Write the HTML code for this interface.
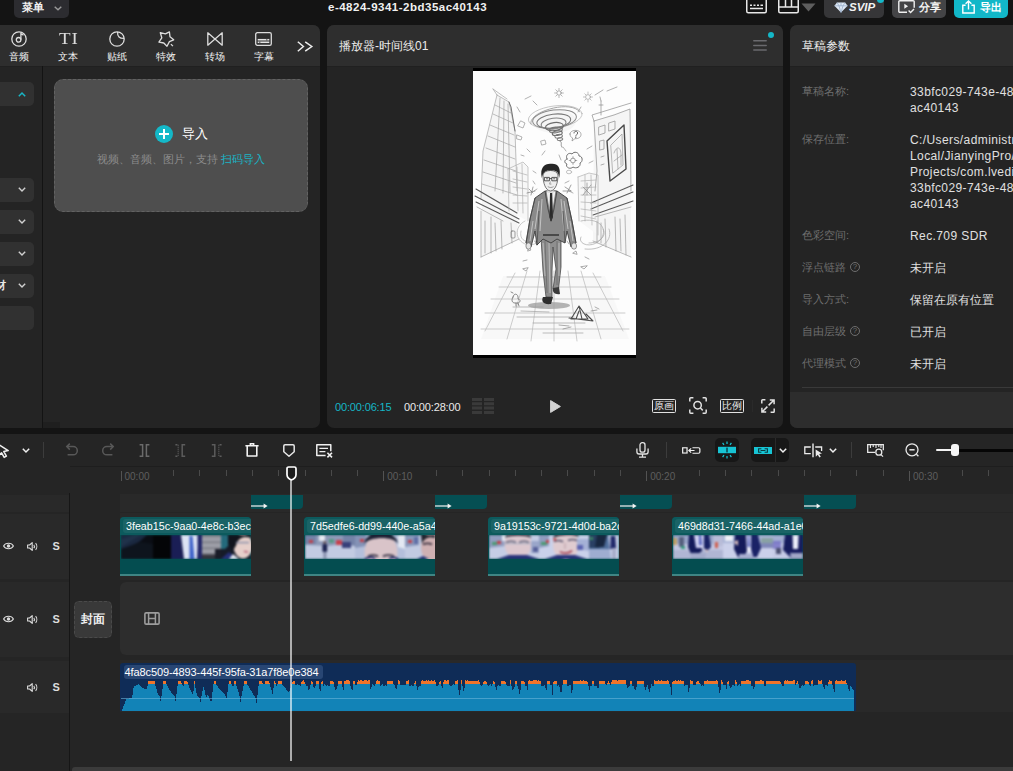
<!DOCTYPE html>
<html lang="zh">
<head>
<meta charset="utf-8">
<title>JianyingPro</title>
<style>
*{box-sizing:border-box;margin:0;padding:0}
html,body{width:1013px;height:771px;overflow:hidden;background:#141414}
body{position:relative;font-family:"Liberation Sans",sans-serif;font-size:12px;color:#e6e6e6;line-height:1}
.abs{position:absolute}
svg{position:absolute;overflow:visible}
.panel{position:absolute;background:#242424;overflow:hidden}
.phead{position:absolute;left:0;top:0;right:0;height:42px;background:#2e2e2e;border-bottom:1px solid #202020}
.t{position:absolute;white-space:nowrap}
/* top bar */
.tbtn{position:absolute;top:-4px;height:21.5px;border-radius:5px}
/* left */
.tab{position:absolute;top:27px;width:40px;text-align:center;font-size:10px;color:#f4f4f4}
.side{position:absolute;left:-8px;width:50px;height:24px;background:#313131;border-radius:5px}
/* right */
.lbl{position:absolute;left:12px;color:#6e6e6e;font-size:11px;white-space:nowrap;margin-top:0.5px}
.val{position:absolute;left:120px;color:#e0e0e0;font-size:12px;white-space:nowrap;line-height:16px;letter-spacing:0.4px}
.val.c{letter-spacing:0}
.q{position:absolute;left:60px;width:10px;height:10px;border:1px solid #6e6e6e;border-radius:50%;font-size:8px;line-height:8px;text-align:center;color:#6e6e6e}
/* timeline */
.rt{position:absolute;top:471.5px;font-size:10px;color:#5e5e5e;white-space:nowrap}
.tick{position:absolute;top:470px;width:1px;height:6px;background:#4a4a4a}
.mtick{position:absolute;top:471px;width:1px;height:10px;background:#535353}
.lane{position:absolute;background:#292929}
.hrow{position:absolute;left:0;width:69px;background:#292929}
.trn{position:absolute;top:495px;width:52px;height:14px;background:#054f53;border-radius:0 0 4px 0}
.clip{position:absolute;top:517px;width:131px;height:59px;background:#044d50;border-radius:4px 4px 0 0;overflow:hidden;border-bottom:2px solid #3f8584}
.clip .h{position:absolute;left:0;top:0;right:0;height:18px;background:#0c5a5d}
.clip .n{position:absolute;left:3px;top:2px;height:14px;width:140px;background:#1a6366;border-radius:3px;font-size:10.7px;line-height:14px;color:#fff;padding-left:3px;white-space:nowrap}
.clip .th{position:absolute;left:1px;top:18px;width:130px;height:24px;overflow:hidden}
.tic{position:absolute;color:#ddd;font-weight:bold;font-size:11px}
</style>
</head>
<body>

<!-- ================= TOP BAR ================= -->
<div class="tbtn" style="left:14px;width:55px;background:#2c2c30"></div>
<div class="t" style="left:13px;top:2px;width:40px;text-align:center;font-size:11px;font-weight:bold;color:#f2f2f2">菜单</div>
<svg style="left:54px;top:6px" width="8" height="5" viewBox="0 0 8 5"><path d="M0.7 0.7 L4 3.8 L7.3 0.7" fill="none" stroke="#9a9a9a" stroke-width="1.4"/></svg>
<div class="t" style="left:328px;top:2px;font-size:11.5px;font-weight:bold;color:#f0f0f0;letter-spacing:0.5px">e-4824-9341-2bd35ac40143</div>


<!-- keyboard icon -->
<svg style="left:746px;top:-4px" width="21" height="18" viewBox="0 0 21 18"><rect x="0.75" y="0.75" width="19.5" height="16" rx="1.5" fill="none" stroke="#e8e8e8" stroke-width="1.5"/><path d="M4 9.2h2M7.5 9.2h2M11 9.2h2M14.5 9.2h2.5M4 12.6h13" stroke="#e8e8e8" stroke-width="1.5" fill="none"/></svg>
<!-- layout icon -->
<svg style="left:778px;top:-4px" width="21" height="18" viewBox="0 0 21 18"><rect x="0.75" y="0.75" width="19.5" height="16" rx="1.5" fill="none" stroke="#e8e8e8" stroke-width="1.5"/><path d="M0.75 11h19.5M7.5 0.75V11M13.5 0.75V11" stroke="#e8e8e8" stroke-width="1.5" fill="none"/></svg>
<svg style="left:801px;top:3px" width="15" height="9" viewBox="0 0 15 9"><path d="M0.5 0.5h14L7.5 8.5z" fill="#5e5e5e"/></svg>
<!-- SVIP -->
<div class="tbtn" style="left:824px;width:60px;background:#363638"></div>
<svg style="left:834px;top:2px" width="14" height="11" viewBox="0 0 14 11"><path d="M3 0.5h8l2.6 3.3L7 10.6 0.4 3.8z" fill="#dfe9f5"/><path d="M0.4 3.8h13.2M3 0.5l2 3.3 2 6.8M11 0.5l-2 3.3-2 6.8M7 0.5v3.3" stroke="#8fa6c4" stroke-width="0.7" fill="none"/></svg>
<div class="t" style="left:849px;top:2px;font-size:11.5px;font-weight:bold;font-style:italic;color:#f2f2f2">SVIP</div>
<div class="abs" style="left:877px;top:-4px;width:7px;height:7px;border-radius:50%;background:#14b8c8"></div>
<!-- share -->
<div class="tbtn" style="left:892px;width:54px;background:#444446"></div>
<svg style="left:898px;top:0px" width="17" height="14" viewBox="0 0 17 14"><path d="M9 12.2H1.8a1 1 0 0 1-1-1V1.8a1 1 0 0 1 1-1h13.4a1 1 0 0 1 1 1v6" fill="none" stroke="#f0f0f0" stroke-width="1.4"/><path d="M6.3 3.8v5l3.8-2.5z" fill="#f0f0f0"/><path d="M10.6 10.6l2 2 3.4-3.6" fill="none" stroke="#f0f0f0" stroke-width="1.4"/></svg>
<div class="t" style="left:910px;top:2px;width:40px;text-align:center;font-size:11px;font-weight:bold;color:#f2f2f2">分享</div>
<!-- export -->
<div class="tbtn" style="left:954px;width:54px;background:#12b7c8"></div>
<svg style="left:962px;top:0px" width="13" height="14" viewBox="0 0 13 14"><path d="M3.6 5.2H0.8V13h11.4V5.2H9.4" fill="none" stroke="#fff" stroke-width="1.4"/><path d="M6.5 9.4V1.2M3.6 3.8l2.9-2.8 2.9 2.8" fill="none" stroke="#fff" stroke-width="1.4"/></svg>
<div class="t" style="left:971px;top:2px;width:40px;text-align:center;font-size:11px;font-weight:bold;color:#fff">导出</div>

<!-- ================= LEFT PANEL ================= -->
<div class="panel" id="left" style="left:-8px;top:25px;width:328px;height:403px;border-radius:7px">
  <div class="phead"></div>
  <!-- tab icons -->
  <svg style="left:19px;top:6px" width="16" height="16" viewBox="0 0 16 16"><circle cx="8" cy="8" r="7.2" fill="none" stroke="#dcdcdc" stroke-width="1.3"/><circle cx="7.6" cy="8.8" r="2.3" fill="none" stroke="#dcdcdc" stroke-width="1.3"/><path d="M9.9 8.8V2.6l2.6 1.5" fill="none" stroke="#dcdcdc" stroke-width="1.3"/></svg>
  <div class="t" style="left:67px;top:4px;font-family:'Liberation Serif',serif;font-size:19px;color:#dcdcdc;letter-spacing:1px;transform:scaleY(0.92)">TI</div>
  <svg style="left:117px;top:6px" width="16" height="16" viewBox="0 0 16 16"><circle cx="8" cy="8" r="7.2" fill="none" stroke="#dcdcdc" stroke-width="1.3"/><path d="M8.6 0.9C8.2 5.6 10.6 7.6 15.1 7.4" fill="none" stroke="#dcdcdc" stroke-width="1.3"/></svg>
  <svg style="left:166px;top:6px" width="17" height="16" viewBox="0 0 17 16"><path d="M11.4 0.9L12 5.8L15.7 8.8L11.4 10.6L9 15.3L5.8 12L0.9 11.2L3.8 6.8L2.3 1.7L7.4 2.9Z" fill="none" stroke="#dcdcdc" stroke-width="1.3" stroke-linejoin="round"/><path d="M12.9 13.1l2 2" stroke="#dcdcdc" stroke-width="1.3"/></svg>
  <svg style="left:215px;top:7px" width="16" height="14" viewBox="0 0 16 14"><path d="M0.8 0.8v12.4L8 7zM15.2 0.8v12.4L8 7z" fill="none" stroke="#dcdcdc" stroke-width="1.3" stroke-linejoin="round"/></svg>
  <svg style="left:263px;top:7px" width="17" height="14" viewBox="0 0 17 14"><rect x="0.7" y="0.7" width="15.6" height="12.6" rx="1.6" fill="none" stroke="#dcdcdc" stroke-width="1.3"/><rect x="2.6" y="6.8" width="11.8" height="4.4" fill="#6c6c6c"/><path d="M2.8 7.7h8.4M12.4 7.7h1.8M2.8 10.3h1.4M5.4 10.3h8.8" stroke="#e4e4e4" stroke-width="1.3"/></svg>
  <svg style="left:305px;top:16px" width="16" height="11" viewBox="0 0 16 11"><path d="M0.8 0.8l5.6 4.7-5.6 4.7M8.2 0.8l6.6 4.7-6.6 4.7" fill="none" stroke="#ececec" stroke-width="1.5"/></svg>
  <div class="tab" style="left:7px">音频</div>
  <div class="tab" style="left:56px">文本</div>
  <div class="tab" style="left:105px">贴纸</div>
  <div class="tab" style="left:154px">特效</div>
  <div class="tab" style="left:203px">转场</div>
  <div class="tab" style="left:252px">字幕</div>
  <!-- sidebar -->
  <div class="abs" style="left:50px;top:41px;width:1px;height:362px;background:#131313"></div>
  <div class="side" style="top:57px"></div>
  <svg style="left:26px;top:67px" width="8" height="5" viewBox="0 0 8 5"><path d="M0.8 4.2L4 1l3.2 3.2" fill="none" stroke="#18b6c6" stroke-width="1.5"/></svg>
  <div class="side" style="top:153px"></div>
  <div class="side" style="top:185px"></div>
  <div class="side" style="top:217px"></div>
  <div class="side" style="top:249px"></div>
  <div class="side" style="top:281px"></div>
  <svg style="left:26px;top:162px" width="8" height="5" viewBox="0 0 8 5"><path d="M0.8 0.8L4 4l3.2-3.2" fill="none" stroke="#d0d0d0" stroke-width="1.4"/></svg>
  <svg style="left:26px;top:194px" width="8" height="5" viewBox="0 0 8 5"><path d="M0.8 0.8L4 4l3.2-3.2" fill="none" stroke="#d0d0d0" stroke-width="1.4"/></svg>
  <svg style="left:26px;top:226px" width="8" height="5" viewBox="0 0 8 5"><path d="M0.8 0.8L4 4l3.2-3.2" fill="none" stroke="#d0d0d0" stroke-width="1.4"/></svg>
  <svg style="left:26px;top:258px" width="8" height="5" viewBox="0 0 8 5"><path d="M0.8 0.8L4 4l3.2-3.2" fill="none" stroke="#d0d0d0" stroke-width="1.4"/></svg>
  <div class="t" style="right:314px;top:255px;font-size:11px;font-weight:bold;color:#e8e8e8">材</div>
  <div class="abs" style="left:51px;top:397px;width:17px;height:6px;background:#1f1f1f"></div>
  <!-- import box -->
  <div class="abs" style="left:62px;top:54px;width:254px;height:133px;background:#4e4e4e;border:1px dashed #626262;border-radius:9px"></div>
  <div class="abs" style="left:163px;top:100px;width:18px;height:18px;border-radius:50%;background:#14b8c8"></div>
  <div class="abs" style="left:167px;top:108px;width:10px;height:2px;background:#fff"></div>
  <div class="abs" style="left:171px;top:104px;width:2px;height:10px;background:#fff"></div>
  <div class="t" style="left:190px;top:102px;font-size:13px;color:#fff">导入</div>
  <div class="t" style="left:62px;top:129px;width:254px;text-align:center;font-size:11px;color:#8c8c8c">视频、音频、图片，支持 <span style="color:#19b4c5">扫码导入</span></div>
</div>

<!-- ================= PLAYER ================= -->
<div class="panel" id="player" style="left:327px;top:25px;width:456px;height:403px;border-radius:7px">
  <div class="phead"></div>
  <div class="t" style="left:12px;top:15px;font-size:12px;color:#ececec">播放器-时间线01</div>
  <!-- header menu -->
  <svg style="left:426px;top:14px" width="14" height="13" viewBox="0 0 14 13"><path d="M0.8 1.8h12.4M0.8 6.4h12.4M0.8 10.9h12.4" stroke="#6a6a6e" stroke-width="1.5" stroke-linecap="round"/></svg>
  <div class="abs" style="left:441px;top:7px;width:6px;height:6px;border-radius:50%;background:#14b8c8"></div>
  <!-- bottom controls -->
  <div class="t" style="left:8px;top:377px;font-size:11px;color:#15b6c6;letter-spacing:-0.15px">00:00:06:15</div>
  <div class="t" style="left:77px;top:377px;font-size:11px;color:#ebebeb;letter-spacing:-0.15px">00:00:28:00</div>
  <svg style="left:145px;top:373px" width="22" height="16" viewBox="0 0 22 16"><path d="M0 1.5h10M0 5.8h10M0 10.1h10M0 14.4h10M12 1.5h10M12 5.8h10M12 10.1h10M12 14.4h10" stroke="#3a3a3a" stroke-width="3"/></svg>
  <svg style="left:223px;top:375px" width="11" height="13" viewBox="0 0 11 13"><path d="M0.6 0.6v11.8L10.4 6.5z" fill="#d2d2d2" stroke="#d2d2d2" stroke-width="1" stroke-linejoin="round"/></svg>
  <div class="abs" style="left:325px;top:374px;width:24px;height:14px;border:1.5px solid #e2e2e2;border-radius:1.5px;font-size:10px;line-height:11px;text-align:center;color:#f0f0f0;white-space:nowrap">原画</div>
  <svg style="left:362px;top:372px" width="18" height="17" viewBox="0 0 18 17"><path d="M0.8 4.6V1.8a1 1 0 0 1 1-1h2.6M13.6 0.8h2.6a1 1 0 0 1 1 1v2.8M17.2 12.4v2.8a1 1 0 0 1-1 1h-2.6M4.4 16.2H1.8a1 1 0 0 1-1-1v-2.8" fill="none" stroke="#e2e2e2" stroke-width="1.5"/><circle cx="8.6" cy="8.2" r="3.7" fill="none" stroke="#e2e2e2" stroke-width="1.5"/><path d="M11.4 11l2.4 2.4" stroke="#e2e2e2" stroke-width="1.5"/></svg>
  <div class="abs" style="left:393px;top:374px;width:24px;height:14px;border:1.5px solid #e2e2e2;border-radius:1.5px;font-size:10px;line-height:11px;text-align:center;color:#f0f0f0;white-space:nowrap">比例</div>
  <div class="abs" style="left:425px;top:375px;width:1px;height:12px;background:#2a2a2a"></div>
  <svg style="left:434px;top:374px" width="14" height="14" viewBox="0 0 14 14"><path d="M0.8 4.4V1.6a0.8 0.8 0 0 1 0.8-0.8h2.8M13.2 9.6v2.8a0.8 0.8 0 0 1-0.8 0.8H9.6" fill="none" stroke="#e2e2e2" stroke-width="1.5"/><path d="M7.6 6.4L13 1M8.8 0.9H13.1V5.2M6.4 7.6L1 13M0.9 8.8V13.1H5.2" fill="none" stroke="#e2e2e2" stroke-width="1.5"/></svg>
  <!-- preview frame -->
  <div class="abs" style="left:146px;top:43px;width:163px;height:290px;background:#000"></div>
  <svg style="left:146px;top:46px" width="163" height="284" viewBox="0 0 163 284">
    <defs><filter id="sf" x="-5%" y="-5%" width="110%" height="110%"><feGaussianBlur stdDeviation="0.28"/></filter></defs>
    <rect width="163" height="284" fill="#fdfdfd"/>
    <g opacity="0.2">
      <path d="M10 80L24 24L36 31L42 60L45 168L8 186Z" fill="#d8d8d8"/>
      <path d="M35 98L50 91L55 96L55 150L36 140Z" fill="#e0e0e0"/>
      <path d="M121 50L157 38L158 186L120 170Z" fill="#d6d6d6"/>
      <path d="M105 106L116 102L125 104L125 164L106 150Z" fill="#e0e0e0"/>
      <ellipse cx="81" cy="50" rx="22" ry="12" fill="#d8d8d8"/>
      <path d="M30 205L132 205L156 268L8 268Z" fill="#e6e6e6"/>
    </g>
    <g fill="none" stroke="#9a9a9a" stroke-width="0.7" stroke-linecap="round" stroke-linejoin="round" filter="url(#sf)">
      <!-- left tall building -->
      <path d="M24 24L36 31L42 60L44 120M24 24L10 80L8 128M24 24L20 18M20 18L34 28M22 34L38 42M20 43L40 52M17 54L41 64M15 65L42 76M13 77L42 88M11 89L43 100M10 101L43 112M9 113L44 124M27 27L22 120M31 30L30 122M35 33L37 122" stroke="#a4a4a4"/>
      <path d="M36 31L38 36L42 60" stroke="#707070" stroke-width="1"/>
      <!-- left awnings / shop -->
      <path d="M3 118L44 142M2 125L46 148M3 131L46 152" stroke="#5a5a5a" stroke-width="1.1"/>
      <path d="M4 136L30 150M8 140L8 186M18 146L18 182M28 150L29 178M38 152L39 172M8 186L46 168M12 150L12 182M22 152L23 180" stroke="#9c9c9c"/>
      <rect x="38" y="160" width="4" height="7" rx="1" stroke="#777"/>
      <!-- left 2nd building -->
      <path d="M35 98L50 91L55 96L55 150M35 98L36 140M40 100L54 104M40 108L54 111M40 116L54 118M40 124L54 125M40 132L54 132M44 96L45 140M49 93L50 142" stroke="#b0b0b0"/>
      <!-- right big building -->
      <path d="M121 50L141 44L157 38L158 120M121 50L119 44L158 32M121 50L124 100L122 120M128 44L128 30M126 34L130 34M128 30L127 26M126 56L132 54L132 62L126 64ZM136 52L142 50L142 58L136 60ZM127 70L131 69L131 78L127 79ZM128 86L131 85M128 94L131 93" stroke="#8e8e8e"/>
      <path d="M134 70L151 54L153 98L137 110Z" stroke="#4a4a4a" stroke-width="1.4"/>
      <path d="M138 74L149 63L150 94L140 102ZM141 82C144 74 148 76 148 84L148 94M144 78L145 98M141 90L149 84" stroke="#9a9a9a"/>
      <!-- right awnings -->
      <path d="M118 132L160 114M118 138L160 121M120 144L160 130" stroke="#5a5a5a" stroke-width="1.1"/>
      <path d="M122 146L158 136M124 150L124 172M132 148L133 176M142 146L143 180M152 144L153 184M120 170L158 186M128 152L128 172M147 148L148 180" stroke="#9c9c9c"/>
      <!-- right 2nd building -->
      <path d="M105 106L116 102L125 104L125 164M105 106L106 150M108 110L123 109M108 117L123 116M108 124L123 124M108 131L123 132M108 138L123 140M108 145L123 148M112 104L112 150M118 104L119 154" stroke="#b0b0b0"/>
      <path d="M110 116l8 8M118 114l-8 10M114 112v12" stroke="#8a8a8a"/>
      <!-- tornado -->
      <g transform="rotate(-7 82 52)">
        <ellipse cx="83" cy="46" rx="27" ry="11" stroke="#b4b4b4"/>
        <path d="M58 50C56 38 100 30 108 44" stroke="#a0a0a0" stroke-width="0.9"/>
        <ellipse cx="82" cy="48" rx="22" ry="9" stroke="#8a8a8a" stroke-width="1"/>
        <ellipse cx="81" cy="50" rx="17" ry="7" stroke="#7a7a7a" stroke-width="1.1"/>
        <ellipse cx="80.5" cy="52.5" rx="12.5" ry="5.4" stroke="#848484" stroke-width="1"/>
        <ellipse cx="81" cy="55.5" rx="9" ry="4" stroke="#6e6e6e" stroke-width="1.2"/>
        <ellipse cx="82" cy="59" rx="6.5" ry="2.8" stroke="#787878" stroke-width="1.1"/>
        <ellipse cx="83" cy="62.4" rx="5" ry="2.2" stroke="#6e6e6e" stroke-width="1.1"/>
        <ellipse cx="84" cy="65.6" rx="3.8" ry="1.8" stroke="#787878" stroke-width="1"/>
        <ellipse cx="85" cy="68.6" rx="2.8" ry="1.4" stroke="#808080" stroke-width="1"/>
        <path d="M84 70C88 72 84 74 86 77" stroke="#8a8a8a" stroke-width="0.9"/>
      </g>
      <!-- suns -->
      <circle cx="86" cy="22" r="2.2" stroke="#888"/><path d="M86 17.4v1.6M86 25v1.6M81.6 22h1.6M88.8 22h1.6M82.8 18.8l1.1 1.1M88.1 24.1l1.1 1.1M89.2 18.8l-1.1 1.1M83.9 24.1l-1.1 1.1" stroke="#999"/>
      <circle cx="115" cy="26" r="2.4" stroke="#999"/><path d="M115 21v1.6M115 29.4V31M110.4 26h1.4M118.2 26h1.4M111.8 22.8l1 1M117.2 28.2l1 1M118.2 22.8l-1 1M112.8 28.2l-1 1" stroke="#aaa"/>
      <!-- bubbles -->
      <path d="M94 88C92 84 96 81 99 83C101 80 106 81 106 85C110 85 110 91 107 92C108 96 103 98 100 96C97 99 92 96 94 93C91 92 91 89 94 88Z" stroke="#6e6e6e" stroke-width="1"/><circle cx="100" cy="89.5" r="2.4" stroke="#777"/><path d="M100 85.6v1.4M100 92v1.4M96.2 89.5h1.4M102.4 89.5h1.4" stroke="#888"/>
      <path d="M97 63C97 58 108 58 108 63.5C108 67 104 68 102 67.6L99 70L99.6 67C98 66.4 97 65 97 63Z" stroke="#8a8a8a"/><path d="M101 62C101 59.6 104.6 59.6 104.6 62C104.6 63.6 102.8 63.6 102.8 65.2M102.8 66.4v0.4" stroke="#5e5e5e" stroke-width="1"/>
      <ellipse cx="96" cy="101" rx="2.6" ry="1.8" stroke="#aaa"/>
      <path d="M48 50l4 2-2 5-5-2zM44 64l5 2-1 3-4-1zM68 70l4-1 1 4-4 1zM54 78l3 3M114 78l5-3M60 100l3 2M116 92l4-2M48 84l3 1M44 36l3 5M60 30l4 4M52 28l6-3M108 36l-3 5M122 24l8-5M134 20l10-4M60 110l2 3M64 118l-3 2M92 112l4-2M96 120l4 2M90 76l3 4M72 80l-3 4M86 84l2 5" stroke="#929292"/>
      <path d="M56 118l4 4M60 116l-2 8M54 122l8-2M92 116l6 4M98 114l-4 8M90 120l8 0" stroke="#7a7a7a"/>
      <!-- swirls on ground -->
      <path d="M108 150C124 146 136 156 128 168C120 178 104 174 108 166M112 178C130 180 140 168 136 158M116 172C128 172 134 164 130 158" stroke="#a8a8a8"/>
      <path d="M52 150C40 156 42 172 56 174C66 174 68 166 60 164M48 160C46 168 52 172 58 170" stroke="#b4b4b4"/>
      <path d="M56 176l2 3-3 1zM62 170l3 1-1 3zM100 182l3-2 1 3zM94 170l2 3M112 186l4 2M50 190l4-1M108 196l3 2 3-3zM50 198l3 2 2-3z" stroke="#8a8a8a"/>
      <!-- floor grid -->
      <path d="M34 206L128 206M26 216L138 216M18 228L146 228M12 242L152 242M8 258L156 258M81 200L81 270M67 200L58 270M54 200L34 268M42 202L12 260M95 200L104 270M108 200L128 268M120 202L150 260" stroke="#b8b8b8"/>
      <path d="M40 236L70 236M44 246L100 246M60 252L112 252M70 262L110 262M48 240L76 241" stroke="#a0a0a0"/>
      <!-- paper boat / bird -->
      <path d="M98 248L106 235L115 248ZM106 235L109 248M103 248L106 240M96 247L120 250L113 243" stroke="#4e4e4e" stroke-width="1.1"/>
      <path d="M40 226C41 221 46 223 45 228C49 229 47 233 42 232C39 232 38 229 40 226ZM43 232L43 235M45 232L46 235M40 222l-2-1" stroke="#7c7c7c" stroke-width="0.9"/>
      <path d="M118 240l6-1M122 236l4 2M86 254l10 1M90 258l8-2" stroke="#8a8a8a"/>
    </g>
    <!-- man -->
    <g>
      <ellipse cx="76" cy="234.5" rx="21" ry="3.4" fill="#9c9c9c" opacity="0.75"/>
      <!-- legs -->
      <path d="M68 166L70 200L73 226L79 226L79 200L80 176L83 198L80 218L85 222L88 196L88 166Z" fill="#8f8f8f" stroke="#4a4a4a" stroke-width="0.8"/>
      <path d="M72 170L74 222M84 170L84 214" stroke="#5e5e5e" stroke-width="0.6" fill="none"/>
      <path d="M70 172L72 205M76 172L77 222M86 172L86 205" stroke="#c4c4c4" stroke-width="0.8" fill="none"/>
      <!-- shoes -->
      <path d="M70 226C68 230 70 234 78 233L80 226Z" fill="#2e2e2e"/>
      <path d="M80 217C79 221 82 224 87 223L86 216Z" fill="#3a3a3a"/>
      <!-- jacket -->
      <path d="M62 127L72 120L84 120L94 127L99 150L103 172L98 176L94 160L92 172L84 168L78 172L70 168L64 174L62 160L58 176L53 172L57 148Z" fill="#8a8a8a" stroke="#3c3c3c" stroke-width="0.9"/>
      <path d="M66 130L62 158M69 128L67 160M88 128L91 160M91 130L95 158M60 150L57 170M97 150L100 170" stroke="#c9c9c9" stroke-width="0.9" fill="none"/>
      <path d="M62 127L57 148L53 172M94 127L99 150L103 172M64 174L66 140M92 172L90 140" stroke="#454545" stroke-width="0.7" fill="none"/>
      <!-- shirt + tie -->
      <path d="M73 120L78 150L83 120Z" fill="#efefef" stroke="#555" stroke-width="0.6"/>
      <path d="M77 122L79.2 122L80 146L78 151L76.4 146Z" fill="#2a2a2a"/>
      <path d="M72 120L75 138L78 150M84 120L81 138L78 150" stroke="#3a3a3a" stroke-width="0.8" fill="none"/>
      <path d="M70 164L86 164" stroke="#333" stroke-width="1.4"/>
      <!-- hands -->
      <ellipse cx="55.5" cy="175" rx="2.6" ry="3.2" fill="#e4e4e4" stroke="#555" stroke-width="0.6"/>
      <ellipse cx="101" cy="175" rx="2.6" ry="3.2" fill="#e4e4e4" stroke="#555" stroke-width="0.6"/>
      <!-- neck/head -->
      <rect x="74.5" y="115" width="6" height="7" fill="#dcdcdc"/>
      <path d="M70 104C70 112 72.5 119.5 77.5 120C82.5 119.5 85 112 85 104C84 98 71 98 70 104Z" fill="#eeeeee" stroke="#555" stroke-width="0.8"/>
      <path d="M68.8 107C66.5 96 72 92.4 78 92.8C84.5 92.2 88.5 96 86.2 107C85.6 101 83.5 99 77.5 99.6C72.5 99 70 101 68.8 107Z" fill="#262626"/>
      <path d="M71.4 106.4h5v3.4h-5zM78.8 106.4h5v3.4h-5zM76.4 107.6h2.4" stroke="#2e2e2e" stroke-width="0.8" fill="none"/>
      <path d="M73 107.8h2M80.2 107.8h2" stroke="#444" stroke-width="0.8"/>
      <path d="M77.4 110.5l-0.8 2.6h1.8M74.8 115.6C76.6 116.8 78.8 116.8 80.6 115.6" stroke="#666" stroke-width="0.6" fill="none"/>
    </g>
  </svg>
</div>

<!-- ================= RIGHT PANEL ================= -->
<div class="panel" id="right" style="left:790px;top:25px;width:240px;height:403px;border-radius:7px">
  <div class="phead"></div>
  <div class="t" style="left:12px;top:15px;font-size:12px;color:#ececec">草稿参数</div>
  <div class="lbl" style="top:60px">草稿名称:</div>
  <div class="val" style="top:59px">33bfc029-743e-4824-9341-2bd35<br>ac40143</div>
  <div class="lbl" style="top:108px">保存位置:</div>
  <div class="val" style="top:107px">C:/Users/administrator/AppData/<br>Local/JianyingPro/User Data/<br>Projects/com.lveditor.draft/<br>33bfc029-743e-4824-9341-2bd35<br>ac40143</div>
  <div class="lbl" style="top:204px">色彩空间:</div>
  <div class="val" style="top:203px">Rec.709 SDR</div>
  <div class="lbl" style="top:236px">浮点链路</div><div class="q" style="top:237px">?</div>
  <div class="val c" style="top:235px">未开启</div>
  <div class="lbl" style="top:268px">导入方式:</div>
  <div class="val c" style="top:267px">保留在原有位置</div>
  <div class="lbl" style="top:300px">自由层级</div><div class="q" style="top:301px">?</div>
  <div class="val c" style="top:299px">已开启</div>
  <div class="lbl" style="top:332px">代理模式</div><div class="q" style="top:333px">?</div>
  <div class="val c" style="top:331px">未开启</div>
  <div class="abs" style="left:12px;top:362px;width:228px;height:1px;background:#393939"></div>
  <div class="abs" style="left:0;top:367px;width:240px;height:36px;background:#2d2d2d"></div>
</div>

<!--TL-START-->
<!-- ================= TIMELINE ================= -->
<div class="abs" id="tl" style="left:0;top:434px;width:1013px;height:337px;background:#252525"></div>
<div class="abs" style="left:70px;top:466px;width:943px;height:1px;background:#1e1e1e"></div>
<div class="hrow" style="top:495px;height:17px"></div>
<div class="hrow" style="top:514px;height:65px"></div>
<div class="hrow" style="top:582px;height:75px"></div>
<div class="hrow" style="top:661px;height:52px"></div>
<div class="abs" style="left:69px;top:493px;width:1px;height:278px;background:#161616"></div>
<div class="lane" style="left:120px;top:494px;width:893px;height:18px"></div>
<div class="lane" style="left:120px;top:513px;width:893px;height:67px"></div>
<div class="lane" style="left:120px;top:582px;width:893px;height:73px;background:#2d2d2d;border-radius:6px 0 0 6px"></div>
<div class="lane" style="left:120px;top:660px;width:893px;height:52px"></div>
<div class="abs" style="left:72px;top:767px;width:941px;height:6px;background:#3b3b3b;border-radius:3px 0 0 3px"></div>
<div class="mtick" style="left:120.5px"></div>
<div class="rt" style="left:124.5px">00:00</div>
<div class="tick" style="left:173.1px"></div>
<div class="tick" style="left:199.3px"></div>
<div class="tick" style="left:225.6px"></div>
<div class="tick" style="left:251.9px"></div>
<div class="tick" style="left:278.2px"></div>
<div class="tick" style="left:304.5px"></div>
<div class="tick" style="left:330.8px"></div>
<div class="tick" style="left:357.0px"></div>
<div class="mtick" style="left:383.3px"></div>
<div class="rt" style="left:387.3px">00:10</div>
<div class="tick" style="left:435.9px"></div>
<div class="tick" style="left:462.2px"></div>
<div class="tick" style="left:488.5px"></div>
<div class="tick" style="left:514.7px"></div>
<div class="tick" style="left:541.0px"></div>
<div class="tick" style="left:567.3px"></div>
<div class="tick" style="left:593.6px"></div>
<div class="tick" style="left:619.9px"></div>
<div class="mtick" style="left:646.2px"></div>
<div class="rt" style="left:650.2px">00:20</div>
<div class="tick" style="left:698.7px"></div>
<div class="tick" style="left:725.0px"></div>
<div class="tick" style="left:751.3px"></div>
<div class="tick" style="left:777.6px"></div>
<div class="tick" style="left:803.9px"></div>
<div class="tick" style="left:830.1px"></div>
<div class="tick" style="left:856.4px"></div>
<div class="tick" style="left:882.7px"></div>
<div class="mtick" style="left:909.0px"></div>
<div class="rt" style="left:913.0px">00:30</div>
<div class="tick" style="left:961.6px"></div>
<div class="tick" style="left:987.8px"></div>
<div class="trn" style="left:251px"></div>
<svg style="left:251px;top:503px" width="17" height="6" viewBox="0 0 17 6"><path d="M0 3h14" stroke="#f4f4f4" stroke-width="1.2"/><path d="M12.6 0.6L16.6 3L12.6 5.4z" fill="#f4f4f4"/></svg>
<div class="trn" style="left:435px"></div>
<svg style="left:435px;top:503px" width="17" height="6" viewBox="0 0 17 6"><path d="M0 3h14" stroke="#f4f4f4" stroke-width="1.2"/><path d="M12.6 0.6L16.6 3L12.6 5.4z" fill="#f4f4f4"/></svg>
<div class="trn" style="left:619.5px"></div>
<svg style="left:619.5px;top:503px" width="17" height="6" viewBox="0 0 17 6"><path d="M0 3h14" stroke="#f4f4f4" stroke-width="1.2"/><path d="M12.6 0.6L16.6 3L12.6 5.4z" fill="#f4f4f4"/></svg>
<div class="trn" style="left:804px"></div>
<svg style="left:804px;top:503px" width="17" height="6" viewBox="0 0 17 6"><path d="M0 3h14" stroke="#f4f4f4" stroke-width="1.2"/><path d="M12.6 0.6L16.6 3L12.6 5.4z" fill="#f4f4f4"/></svg>
<div class="clip" style="left:120px"><div class="h"></div><div class="n">3feab15c-9aa0-4e8c-b3ec-1f6a</div><div class="th"><svg style="left:0;top:0;filter:blur(1px)" width="130" height="24" viewBox="0 0 130 24" preserveAspectRatio="none"><rect width="130" height="24" fill="#0a0d14"/>
<path d="M0 0h26l-8 7-10 5-8 4z" fill="#1a2840"/><path d="M0 4l14-4h6L0 12z" fill="#24364f" opacity=".7"/><path d="M0 14l20-7 30 5v12H0z" fill="#0e141d"/><rect x="32" width="18" height="24" fill="#040507"/>
<rect x="50" width="50" height="24" fill="#8a8b94"/><rect x="50" width="30" height="24" fill="#1a1e55"/><path d="M60 0h18l-2 24H63z" fill="#dde3f4"/><path d="M68.5 1h3l2 23h-5z" fill="#3f63c9"/><rect x="76.5" width="4.5" height="24" fill="#22266a"/><path d="M81 3h19v2.6H81zM81 9h19v2.6H81zM81 15h19v2.6H81z" fill="#a4a5ad"/><rect x="81" y="19.5" width="19" height="4.5" fill="#34343d"/><path d="M94 14h6v10h-6z" fill="#1a1c28"/>
<rect x="100" width="30" height="24" fill="#161b28"/><path d="M100 0h9v9l-5 5h-4z" fill="#2b8ba0" opacity=".7"/><ellipse cx="122" cy="11" rx="9.5" ry="12.5" fill="#e6cfca"/><path d="M107 0h23v2.6c-8-2-13 0-15 8l-3 5-5-6z" fill="#12141d"/><path d="M115 7.6h13" stroke="#8d92ac" stroke-width="1.5"/><path d="M100 24l8-7 8 7z" fill="#252f78"/><path d="M108 24l4-5 6 5z" fill="#e6eaf6"/><path d="M123 16.4l4 0.8" stroke="#b04e68" stroke-width="1.3"/></svg></div></div>
<div class="clip" style="left:304px"><div class="h"></div><div class="n">7d5edfe6-dd99-440e-a5a4-77c1</div><div class="th"><svg style="left:0;top:0;filter:blur(1px)" width="130" height="24" viewBox="0 0 130 24" preserveAspectRatio="none"><rect width="130" height="24" fill="#c2cbe2"/>
<path d="M0 0h50v10l-12-1-14 2-24-1z" fill="#8e9ab8"/><path d="M0 0h11v9H0zM38 0h12v11l-12-2z" fill="#7583a8"/><rect x="14" y="0" width="6" height="6" fill="#e6eaf2"/><rect x="4" y="5" width="4" height="3" fill="#c0404a"/><rect x="31" y="5" width="6" height="5" fill="#c8404c"/><rect x="24" y="4" width="5" height="4" fill="#4a9a78" opacity=".8"/><rect x="37" y="7" width="9" height="6" fill="#38407a"/><rect x="17.4" y="9" width="4.8" height="8.4" rx="1.6" fill="#1c2350"/><rect x="18.4" y="16.6" width="3" height="7" fill="#8890ac"/><circle cx="19.8" cy="7.4" r="1.7" fill="#6a5a60"/>
<rect x="50" width="50" height="24" fill="#b4bfdb"/><path d="M50 0h11v11l-11 2z" fill="#8492b6"/><rect x="55" y="4" width="4" height="3" fill="#c0404a"/><path d="M93 0h7v14l-7-2z" fill="#e4e8f2"/><ellipse cx="76" cy="17" rx="16.5" ry="19" fill="#d9c4c9"/><path d="M59.5 9C60 -6 92 -6 93 9C90 1 64 1 59.5 9z" fill="#1c1f33"/><path d="M63 21.4c3-1.6 7-1.6 10 0M78 21.4c3-1.6 8-1.6 11 0" stroke="#3a3446" stroke-width="1.8" fill="none"/><path d="M60 24c4-2 8-2 10 0M84 24c3-2 6-2 9 0" stroke="#283070" stroke-width="2" fill="none"/>
<rect x="100" width="30" height="24" fill="#c2cbe2"/><path d="M100 0h14v10l-14 2z" fill="#8a98bb"/><rect x="103" y="5" width="4" height="3" fill="#c0404a"/><rect x="109" y="2" width="4" height="7" fill="#5f6fa6"/><ellipse cx="127" cy="12" rx="11" ry="15" fill="#cfb1b3"/><path d="M116 0h14v3c-6-2-11 0-13 6z" fill="#22222d"/><path d="M118 9.4c3-1.4 6-1.4 9 0" stroke="#3c3240" stroke-width="1.8" fill="none"/><path d="M112 24l6-3 6 3z" fill="#27327a"/></svg></div></div>
<div class="clip" style="left:488px"><div class="h"></div><div class="n">9a19153c-9721-4d0d-ba2c-50e1</div><div class="th"><svg style="left:0;top:0;filter:blur(1px)" width="130" height="24" viewBox="0 0 130 24" preserveAspectRatio="none"><rect width="130" height="24" fill="#c5cde5"/>
<path d="M0 0h16v11L0 13z" fill="#909dc0"/><rect x="3" y="7" width="5" height="3" fill="#4a9a70"/><rect x="8" y="6" width="4" height="3" fill="#c0404a"/><rect x="13" y="0" width="4" height="6" fill="#e8ecf6"/><ellipse cx="29" cy="9" rx="13.5" ry="15" fill="#dcc8cf"/><path d="M15.6 3C17 -4 41 -4 42.4 3C36 0 22 0 15.6 3z" fill="#3a3845"/><path d="M17 7.4c3-1.4 7-1.4 10 0M30 7.4c3-1.4 7-1.4 10 0" stroke="#5d6078" stroke-width="1.6" fill="none"/><path d="M16 8.6h25" stroke="#9aa8c0" stroke-width="0.8"/><path d="M25 21.6h8" stroke="#5a1826" stroke-width="2.2"/><path d="M8 24l12-4h18l12 4z" fill="#28327a"/><path d="M42 6h8v12h-8z" fill="#9aa6ca"/><rect x="44" y="12" width="5" height="5" fill="#56609a"/>
<rect x="50" width="50" height="24" fill="#c9d1ea"/><path d="M50 0h10v11l-10 2z" fill="#909dc0"/><rect x="52" y="7" width="6" height="3" fill="#4a9a70"/><rect x="57" y="5" width="3" height="3" fill="#c0404a"/><ellipse cx="77" cy="10" rx="13" ry="15" fill="#dfcbd0"/><path d="M64 3C66 -4 88 -4 90 2C84 -1 70 0 64 3z" fill="#3a3845"/><path d="M65 6.4c3-1.2 6-1.2 9 0.4M79 5.4c3-1.2 6-1.2 9 0" stroke="#54506a" stroke-width="1.6" fill="none"/><rect x="64.4" y="3.4" width="2.6" height="2" fill="#d03030"/><path d="M71 16.6c3 2.4 9 2 12-1" stroke="#a84456" stroke-width="1.8" fill="none"/><path d="M76 8v6" stroke="#c4a8b0" stroke-width="1.4"/><path d="M56 24l12-4h18l12 4z" fill="#28327a"/><path d="M88 4h12v12l-12-2z" fill="#a5b1d6"/><rect x="88" y="10" width="6" height="5" fill="#5a62b0"/>
<rect x="100" width="30" height="24" fill="#4f6e9c"/><path d="M100 0h14l-3 13h-11z" fill="#2a4064"/><path d="M108 0h10l-3 12h-9z" fill="#182740"/><rect x="101" y="2" width="3" height="3" fill="#3a8a60"/><path d="M100 14h30v10h-30z" fill="#9eadd0"/><path d="M119 0h11v24h-8z" fill="#c8d0e8"/><path d="M121.6 1h4.6l1 13h-6z" fill="#20296a"/><path d="M123 13h4v11h-4z" fill="#a6acc8"/></svg></div></div>
<div class="clip" style="left:672px"><div class="h"></div><div class="n">469d8d31-7466-44ad-a1e0-8b52</div><div class="th"><svg style="left:0;top:0;filter:blur(1px)" width="130" height="24" viewBox="0 0 130 24" preserveAspectRatio="none"><rect width="130" height="24" fill="#c3c7e2"/>
<path d="M0 0h50v9H0z" fill="#98a4c8"/><rect x="0" y="3" width="4" height="7" fill="#c8a050" opacity=".8"/><rect x="6" y="2" width="5" height="10" fill="#56607e"/><rect x="8" y="11" width="4" height="3" fill="#3a9a80"/><path d="M0 15h50v9H0z" fill="#b0b6d4"/><rect x="40" y="0" width="10" height="11" fill="#b8bcd8"/><rect x="42" y="7" width="3" height="6" fill="#d06050"/><path d="M16 0h12l1 16-4 3h-7l-3-7z" fill="#141a5a"/><path d="M21 0h10l-1 13h-7z" fill="#cfd0f2"/><path d="M31 0h5l2 12-4 4-3-3z" fill="#1a2266"/><path d="M26 0h2l1 10h-3z" fill="#5a66c0"/><path d="M17 18h16l-1 6H18z" fill="#a4aacb"/><path d="M32 14l3 1-1 3z" fill="#e2c4c0"/>
<rect x="50" width="50" height="24" fill="#cbd0ea"/><path d="M50 0h50v8H50z" fill="#a9b4d6"/><rect x="52" width="8" height="6" fill="#eef0f8"/><path d="M88 3h12v8H88z" fill="#7f9c92" opacity=".75"/><rect x="86" y="8" width="14" height="5" fill="#8088b8"/><path d="M62 0h12l1 14-4 8h-6l-4-8z" fill="#141a5a"/><path d="M73 0h6l-1 17h-4z" fill="#eceefa"/><path d="M78 0h7l3 13-4 9h-4l-2-8z" fill="#1a2266"/><path d="M74.6 0h1.8l1 12h-3z" fill="#6670c4"/><path d="M66 19h14v5H66z" fill="#a8aed0"/><path d="M61 7l4-2v6z" fill="#e4c6c2"/>
<rect x="100" width="30" height="24" fill="#c6cbe6"/><path d="M100 0h30v8h-30z" fill="#a2aed2"/><rect x="100" y="6" width="8" height="8" fill="#6a62c0" opacity=".7"/><rect x="103" y="13" width="5" height="6" fill="#4a4e70"/><path d="M112 0h18v18l-6 5h-6l-8-8z" fill="#161c5e"/><path d="M119.6 0h6l-0.6 14h-5z" fill="#eceefa"/><path d="M117 18h13v6h-12z" fill="#a0a6c6"/></svg></div></div>
<div class="abs" style="left:74px;top:601px;width:38px;height:37px;background:#393939;border:1px dashed #4a4a4a;border-radius:5px"></div>
<div class="t" style="left:74px;top:613px;width:38px;text-align:center;font-size:12px;font-weight:bold;color:#f0f0f0">封面</div>
<svg style="left:144px;top:612px" width="16" height="13" viewBox="0 0 16 13"><rect x="0.9" y="0.9" width="14.2" height="11.2" rx="1.2" fill="none" stroke="#9c9c9c" stroke-width="1.6"/><path d="M4.6 0.9v11.2M11.4 0.9v11.2M4.6 6.5h6.8" stroke="#9c9c9c" stroke-width="1.5" fill="none"/></svg>
<svg style="left:3px;top:542px" width="11" height="8" viewBox="0 0 11 8"><path d="M0.6 4C2.4 0.4 8.6 0.4 10.4 4C8.6 7.6 2.4 7.6 0.6 4z" fill="none" stroke="#dcdcdc" stroke-width="1.1"/><circle cx="5.5" cy="4" r="1.7" fill="#dcdcdc"/></svg>
<svg style="left:27px;top:541.5px" width="11" height="9" viewBox="0 0 11 9"><path d="M0.6 3h2l2.6-2.4v7.8L2.6 6h-2z" fill="none" stroke="#dcdcdc" stroke-width="1.1" stroke-linejoin="round"/><path d="M6.8 2.8c0.8 1 0.8 2.4 0 3.4M8.6 1.2c1.6 1.8 1.6 4.8 0 6.6" fill="none" stroke="#dcdcdc" stroke-width="1.1"/></svg>
<div class="tic" style="left:52.5px;top:540.5px">S</div>
<svg style="left:3px;top:615px" width="11" height="8" viewBox="0 0 11 8"><path d="M0.6 4C2.4 0.4 8.6 0.4 10.4 4C8.6 7.6 2.4 7.6 0.6 4z" fill="none" stroke="#dcdcdc" stroke-width="1.1"/><circle cx="5.5" cy="4" r="1.7" fill="#dcdcdc"/></svg>
<svg style="left:27px;top:614.5px" width="11" height="9" viewBox="0 0 11 9"><path d="M0.6 3h2l2.6-2.4v7.8L2.6 6h-2z" fill="none" stroke="#dcdcdc" stroke-width="1.1" stroke-linejoin="round"/><path d="M6.8 2.8c0.8 1 0.8 2.4 0 3.4M8.6 1.2c1.6 1.8 1.6 4.8 0 6.6" fill="none" stroke="#dcdcdc" stroke-width="1.1"/></svg>
<div class="tic" style="left:52.5px;top:613.5px">S</div>
<svg style="left:27px;top:682.5px" width="11" height="9" viewBox="0 0 11 9"><path d="M0.6 3h2l2.6-2.4v7.8L2.6 6h-2z" fill="none" stroke="#dcdcdc" stroke-width="1.1" stroke-linejoin="round"/><path d="M6.8 2.8c0.8 1 0.8 2.4 0 3.4M8.6 1.2c1.6 1.8 1.6 4.8 0 6.6" fill="none" stroke="#dcdcdc" stroke-width="1.1"/></svg>
<div class="tic" style="left:52.5px;top:681.5px">S</div>
<div class="abs" style="left:120px;top:662.5px;width:735.5px;height:48.5px;background:#0f2c57;border-radius:3px 3px 0 0"></div>
<svg style="left:0;top:0" width="1013" height="771" viewBox="0 0 1013 771" shape-rendering="crispEdges"><path d="M121 710.8L121 710.6H122L122 709.0H123L123 706.2H124L124 703.5H125L125 700.8H126L126 699.2H127L127 698.9H128L128 698.6H129L129 698.3H130L130 698.0H131L131 697.7H132L132 695.2H133L133 687.5H134L134 686.2H135L135 685.7H136L136 685.2H137L137 684.7H138L138 684.3H139L139 685.1H140L140 685.9H141L141 686.7H142L142 687.5H143L143 688.3H144L144 689.1H145L145 689.4H146L146 689.4H147L147 685.6H148L148 680.5H149L149 680.5H150L150 680.5H151L151 680.5H152L152 680.5H153L153 680.5H154L154 681.1H155L155 685.8H156L156 689.3H157L157 692.8H158L158 695.2H159L159 696.4H160L160 701.0H161L161 696.3H162L162 688.9H163L163 680.5H164L164 680.5H165L165 680.5H166L166 684.0H167L167 685.9H168L168 687.7H169L169 689.6H170L170 691.4H171L171 693.1H172L172 694.0H173L173 694.8H174L174 695.7H175L175 700.5H176L176 694.0H177L177 686.0H178L178 680.5H179L179 680.5H180L180 680.5H181L181 682.5H182L182 685.3H183L183 686.0H184L184 680.5H185L185 680.5H186L186 680.5H187L187 681.5H188L188 685.2H189L189 687.5H190L190 689.8H191L191 692.1H192L192 694.4H193L193 690.5H194L194 681.0H195L195 688.0H196L196 693.0H197L197 695.9H198L198 696.8H199L199 697.7H200L200 702.0H201L201 695.5H202L202 690.6H203L203 687.2H204L204 690.0H205L205 695.3H206L206 697.0H207L207 695.0H208L208 695.7H209L209 699.0H210L210 701.0H211L211 700.7H212L212 691.7H213L213 684.0H214L214 680.8H215L215 680.8H216L216 685.0H217L217 686.4H218L218 687.9H219L219 689.3H220L220 690.4H221L221 691.2H222L222 692.1H223L223 692.9H224L224 693.7H225L225 696.2H226L226 698.4H227L227 692.3H228L228 684.0H229L229 680.5H230L230 680.5H231L231 684.2H232L232 685.5H233L233 685.5H234L234 680.8H235L235 680.8H236L236 686.3H237L237 689.0H238L238 691.7H239L239 696.0H240L240 702.0H241L241 695.8H242L242 690.7H243L243 686.0H244L244 680.5H245L245 680.5H246L246 680.5H247L247 684.5H248L248 686.2H249L249 687.9H250L250 689.6H251L251 691.3H252L252 693.0H253L253 694.6H254L254 696.2H255L255 697.8H256L256 702.9H257L257 695.1H258L258 686.0H259L259 680.5H260L260 680.5H261L261 680.5H262L262 683.4H263L263 684.0H264L264 684.0H265L265 680.5H266L266 680.5H267L267 680.5H268L268 680.5H269L269 683.3H270L270 687.2H271L271 690.3H272L272 693.5H273L273 688.0H274L274 680.5H275L275 682.6H276L276 685.6H277L277 684.2H278L278 680.5H279L279 680.5H280L280 680.5H281L281 680.5H282L282 684.7H283L283 685.9H284L284 687.1H285L285 688.3H286L286 689.5H287L287 690.7H288L288 691.9H289L289 690.7H290L290 688.0H291L291 684.0H292L292 681.7H293L293 680.8H294L294 681.1H295L295 685.4H296L296 685.3H297L297 684.4H298L298 684.8H299L299 685.3H300L300 685.7H301L301 681.5H302L302 680.6H303L303 680.0H304L304 682.0H305L305 684.3H306L306 685.5H307L307 686.2H308L308 689.5H309L309 688.7H310L310 685.3H311L311 680.5H312L312 681.7H313L313 686.6H314L314 688.3H315L315 686.3H316L316 680.8H317L317 680.5H318L318 680.9H319L319 688.9H320L320 690.5H321L321 682.1H322L322 681.0H323L323 685.7H324L324 684.4H325L325 684.9H326L326 685.5H327L327 684.8H328L328 686.2H329L329 686.2H330L330 680.6H331L331 680.7H332L332 680.9H333L333 681.6H334L334 687.2H335L335 690.3H336L336 688.7H337L337 686.2H338L338 680.8H339L339 680.9H340L340 680.7H341L341 680.8H342L342 687.1H343L343 690.4H344L344 681.1H345L345 680.5H346L346 680.1H347L347 680.3H348L348 680.4H349L349 680.5H350L350 686.0H351L351 689.0H352L352 689.9H353L353 680.5H354L354 680.8H355L355 685.4H356L356 684.6H357L357 681.7H358L358 680.4H359L359 680.6H360L360 680.0H361L361 679.9H362L362 680.5H363L363 680.5H364L364 679.9H365L365 680.1H366L366 680.4H367L367 680.5H368L368 679.9H369L369 680.3H370L370 689.0H371L371 686.7H372L372 684.4H373L373 684.9H374L374 685.9H375L375 684.4H376L376 680.7H377L377 680.4H378L378 680.6H379L379 680.9H380L380 686.3H381L381 684.8H382L382 684.3H383L383 686.0H384L384 686.2H385L385 685.2H386L386 685.8H387L387 680.5H388L388 680.7H389L389 680.7H390L390 680.6H391L391 681.3H392L392 681.3H393L393 684.4H394L394 685.0H395L395 687.6H396L396 688.9H397L397 685.3H398L398 680.2H399L399 680.9H400L400 684.5H401L401 685.0H402L402 684.8H403L403 685.2H404L404 684.9H405L405 685.3H406L406 681.1H407L407 681.0H408L408 680.3H409L409 686.2H410L410 685.5H411L411 684.9H412L412 685.6H413L413 685.7H414L414 682.8H415L415 681.0H416L416 686.2H417L417 689.7H418L418 687.0H419L419 685.6H420L420 685.8H421L421 680.5H422L422 680.2H423L423 680.7H424L424 680.9H425L425 680.7H426L426 680.3H427L427 680.8H428L428 680.2H429L429 680.9H430L430 680.6H431L431 680.4H432L432 680.6H433L433 680.7H434L434 680.3H435L435 682.2H436L436 686.1H437L437 686.0H438L438 684.5H439L439 681.5H440L440 680.8H441L441 685.7H442L442 688.2H443L443 682.3H444L444 680.1H445L445 680.1H446L446 680.7H447L447 680.3H448L448 680.3H449L449 685.0H450L450 686.1H451L451 685.6H452L452 685.0H453L453 684.4H454L454 684.8H455L455 680.9H456L456 680.7H457L457 680.0H458L458 689.5H459L459 694.7H460L460 689.8H461L461 679.9H462L462 686.4H463L463 690.5H464L464 687.9H465L465 680.1H466L466 681.0H467L467 680.2H468L468 680.5H469L469 680.6H470L470 680.9H471L471 680.9H472L472 680.7H473L473 680.5H474L474 680.9H475L475 680.9H476L476 680.9H477L477 680.8H478L478 680.2H479L479 681.9H480L480 685.3H481L481 686.0H482L482 684.8H483L483 682.0H484L484 680.8H485L485 680.5H486L486 682.1H487L487 684.9H488L488 686.1H489L489 685.3H490L490 684.4H491L491 685.9H492L492 684.4H493L493 680.5H494L494 681.6H495L495 687.0H496L496 690.2H497L497 685.8H498L498 684.5H499L499 686.0H500L500 686.1H501L501 681.1H502L502 680.5H503L503 681.2H504L504 680.6H505L505 682.3H506L506 684.6H507L507 685.8H508L508 685.9H509L509 685.7H510L510 680.0H511L511 685.6H512L512 689.6H513L513 689.2H514L514 686.9H515L515 681.2H516L516 680.5H517L517 686.2H518L518 689.2H519L519 694.4H520L520 690.0H521L521 680.6H522L522 681.2H523L523 680.8H524L524 682.0H525L525 686.1H526L526 685.9H527L527 689.7H528L528 681.1H529L529 680.4H530L530 680.6H531L531 680.8H532L532 680.8H533L533 680.2H534L534 680.1H535L535 680.3H536L536 680.4H537L537 680.5H538L538 680.0H539L539 680.5H540L540 681.1H541L541 686.2H542L542 686.1H543L543 686.2H544L544 684.6H545L545 688.1H546L546 689.9H547L547 681.3H548L548 680.6H549L549 680.7H550L550 684.7H551L551 685.3H552L552 694.5H553L553 681.9H554L554 680.5H555L555 680.6H556L556 680.9H557L557 685.7H558L558 685.1H559L559 686.9H560L560 691.8H561L561 691.6H562L562 685.0H563L563 680.1H564L564 680.4H565L565 680.1H566L566 680.2H567L567 685.7H568L568 685.7H569L569 684.5H570L570 684.7H571L571 692.9H572L572 689.5H573L573 680.5H574L574 680.6H575L575 680.5H576L576 680.7H577L577 680.9H578L578 680.7H579L579 681.0H580L580 680.3H581L581 680.8H582L582 681.1H583L583 680.3H584L584 680.7H585L585 680.8H586L586 680.5H587L587 682.0H588L588 686.3H589L589 690.2H590L590 685.6H591L591 686.0H592L592 680.9H593L593 680.8H594L594 686.2H595L595 686.0H596L596 686.0H597L597 687.9H598L598 687.7H599L599 681.1H600L600 680.7H601L601 680.8H602L602 680.5H603L603 680.5H604L604 681.4H605L605 684.4H606L606 685.0H607L607 682.5H608L608 681.1H609L609 682.6H610L610 684.7H611L611 682.0H612L612 679.8H613L613 679.9H614L614 679.9H615L615 680.0H616L616 680.1H617L617 680.6H618L618 680.2H619L619 679.9H620L620 680.0H621L621 679.8H622L622 679.8H623L623 680.2H624L624 680.2H625L625 680.0H626L626 684.5H627L627 688.3H628L628 687.3H629L629 685.5H630L630 680.9H631L631 680.8H632L632 685.8H633L633 686.1H634L634 688.6H635L635 689.5H636L636 687.1H637L637 680.9H638L638 680.9H639L639 680.6H640L640 680.8H641L641 681.1H642L642 681.3H643L643 680.6H644L644 687.2H645L645 690.1H646L646 687.0H647L647 684.9H648L648 689.3H649L649 692.1H650L650 688.2H651L651 684.3H652L652 685.9H653L653 686.1H654L654 680.3H655L655 680.9H656L656 680.5H657L657 681.0H658L658 680.3H659L659 680.6H660L660 680.9H661L661 680.4H662L662 680.9H663L663 680.9H664L664 680.9H665L665 681.1H666L666 680.6H667L667 680.4H668L668 680.5H669L669 684.4H670L670 687.4H671L671 694.5H672L672 681.9H673L673 680.7H674L674 681.0H675L675 680.3H676L676 681.2H677L677 680.8H678L678 680.4H679L679 681.0H680L680 680.3H681L681 680.6H682L682 680.8H683L683 681.1H684L684 685.7H685L685 684.6H686L686 684.6H687L687 684.6H688L688 691.9H689L689 688.3H690L690 680.4H691L691 680.5H692L692 680.7H693L693 685.0H694L694 685.1H695L695 684.6H696L696 682.0H697L697 680.7H698L698 680.7H699L699 682.5H700L700 684.3H701L701 685.6H702L702 685.1H703L703 685.9H704L704 681.2H705L705 680.6H706L706 680.6H707L707 680.4H708L708 681.1H709L709 680.5H710L710 680.8H711L711 680.8H712L712 681.1H713L713 680.7H714L714 680.5H715L715 680.7H716L716 680.4H717L717 680.6H718L718 687.0H719L719 692.8H720L720 689.8H721L721 680.4H722L722 681.9H723L723 684.7H724L724 685.0H725L725 685.4H726L726 688.7H727L727 682.1H728L728 680.7H729L729 686.3H730L730 688.4H731L731 687.2H732L732 685.2H733L733 685.0H734L734 686.0H735L735 680.3H736L736 682.0H737L737 685.6H738L738 684.6H739L739 684.4H740L740 685.5H741L741 680.5H742L742 680.7H743L743 680.8H744L744 680.5H745L745 680.8H746L746 680.3H747L747 680.2H748L748 680.3H749L749 680.7H750L750 680.8H751L751 685.7H752L752 686.4H753L753 688.7H754L754 686.9H755L755 681.3H756L756 680.6H757L757 680.9H758L758 680.5H759L759 680.7H760L760 680.3H761L761 680.2H762L762 681.0H763L763 680.7H764L764 685.5H765L765 686.2H766L766 681.0H767L767 680.8H768L768 680.6H769L769 680.8H770L770 681.1H771L771 681.4H772L772 680.5H773L773 681.3H774L774 681.2H775L775 681.2H776L776 680.7H777L777 680.6H778L778 681.2H779L779 681.1H780L780 681.9H781L781 684.4H782L782 686.3H783L783 686.0H784L784 680.9H785L785 680.3H786L786 680.7H787L787 680.3H788L788 680.5H789L789 680.9H790L790 680.5H791L791 680.9H792L792 680.7H793L793 680.4H794L794 680.4H795L795 685.4H796L796 682.6H797L797 680.5H798L798 684.3H799L799 687.7H800L800 687.6H801L801 685.9H802L802 685.3H803L803 685.8H804L804 684.8H805L805 680.5H806L806 680.5H807L807 680.7H808L808 681.9H809L809 685.2H810L810 685.6H811L811 680.8H812L812 680.2H813L813 686.2H814L814 684.8H815L815 685.3H816L816 684.5H817L817 685.3H818L818 680.2H819L819 680.5H820L820 680.7H821L821 680.3H822L822 684.3H823L823 686.6H824L824 688.5H825L825 684.8H826L826 685.0H827L827 685.9H828L828 681.5H829L829 680.0H830L830 680.6H831L831 680.7H832L832 685.1H833L833 689.1H834L834 692.4H835L835 681.4H836L836 680.4H837L837 680.7H838L838 680.7H839L839 680.9H840L840 680.8H841L841 680.4H842L842 680.6H843L843 680.9H844L844 680.6H845L845 680.4H846L846 682.5H847L847 684.9H848L848 688.8H849L849 691.1H850L850 685.6H851L851 687.2H852L852 688.8H853L853 690.4H854V710.8Z" fill="#f0742a"/><path d="M121 710.8L121 710.6H122L122 709.0H123L123 706.2H124L124 703.5H125L125 700.8H126L126 699.2H127L127 698.9H128L128 698.6H129L129 698.3H130L130 698.0H131L131 697.7H132L132 695.2H133L133 687.5H134L134 686.2H135L135 685.7H136L136 685.2H137L137 684.7H138L138 684.3H139L139 685.1H140L140 685.9H141L141 686.7H142L142 687.5H143L143 688.3H144L144 689.1H145L145 689.4H146L146 689.4H147L147 685.6H148L148 684.0H149L149 684.0H150L150 684.0H151L151 684.0H152L152 684.0H153L153 684.0H154L154 684.0H155L155 685.8H156L156 689.3H157L157 692.8H158L158 695.2H159L159 696.4H160L160 701.0H161L161 696.3H162L162 688.9H163L163 684.0H164L164 684.0H165L165 684.0H166L166 684.0H167L167 685.9H168L168 687.7H169L169 689.6H170L170 691.4H171L171 693.1H172L172 694.0H173L173 694.8H174L174 695.7H175L175 700.5H176L176 694.0H177L177 686.0H178L178 684.0H179L179 684.0H180L180 684.0H181L181 684.0H182L182 685.3H183L183 686.0H184L184 684.0H185L185 684.0H186L186 684.0H187L187 684.0H188L188 685.2H189L189 687.5H190L190 689.8H191L191 692.1H192L192 694.4H193L193 690.5H194L194 684.0H195L195 688.0H196L196 693.0H197L197 695.9H198L198 696.8H199L199 697.7H200L200 702.0H201L201 695.5H202L202 690.6H203L203 687.2H204L204 690.0H205L205 695.3H206L206 697.0H207L207 695.0H208L208 695.7H209L209 699.0H210L210 701.0H211L211 700.7H212L212 691.7H213L213 684.0H214L214 684.0H215L215 684.0H216L216 685.0H217L217 686.4H218L218 687.9H219L219 689.3H220L220 690.4H221L221 691.2H222L222 692.1H223L223 692.9H224L224 693.7H225L225 696.2H226L226 698.4H227L227 692.3H228L228 684.0H229L229 684.0H230L230 684.0H231L231 684.2H232L232 685.5H233L233 685.5H234L234 684.0H235L235 684.0H236L236 686.3H237L237 689.0H238L238 691.7H239L239 696.0H240L240 702.0H241L241 695.8H242L242 690.7H243L243 686.0H244L244 684.0H245L245 684.0H246L246 684.0H247L247 684.5H248L248 686.2H249L249 687.9H250L250 689.6H251L251 691.3H252L252 693.0H253L253 694.6H254L254 696.2H255L255 697.8H256L256 702.9H257L257 695.1H258L258 686.0H259L259 684.0H260L260 684.0H261L261 684.0H262L262 684.0H263L263 684.0H264L264 684.0H265L265 684.0H266L266 684.0H267L267 684.0H268L268 684.0H269L269 684.0H270L270 687.2H271L271 690.3H272L272 693.5H273L273 688.0H274L274 684.0H275L275 684.0H276L276 685.6H277L277 684.2H278L278 684.0H279L279 684.0H280L280 684.0H281L281 684.0H282L282 684.7H283L283 685.9H284L284 687.1H285L285 688.3H286L286 689.5H287L287 690.7H288L288 691.9H289L289 690.7H290L290 688.0H291L291 684.0H292L292 684.0H293L293 684.0H294L294 684.0H295L295 685.4H296L296 685.3H297L297 684.4H298L298 684.8H299L299 685.3H300L300 685.7H301L301 684.0H302L302 684.0H303L303 684.0H304L304 684.0H305L305 684.3H306L306 685.5H307L307 686.2H308L308 689.5H309L309 688.7H310L310 685.3H311L311 684.0H312L312 684.0H313L313 686.6H314L314 688.3H315L315 686.3H316L316 684.0H317L317 684.0H318L318 684.0H319L319 688.9H320L320 690.5H321L321 684.0H322L322 684.0H323L323 685.7H324L324 684.4H325L325 684.9H326L326 685.5H327L327 684.8H328L328 686.2H329L329 686.2H330L330 684.0H331L331 684.0H332L332 684.0H333L333 684.0H334L334 687.2H335L335 690.3H336L336 688.7H337L337 686.2H338L338 684.0H339L339 684.0H340L340 684.0H341L341 684.0H342L342 687.1H343L343 690.4H344L344 684.0H345L345 684.0H346L346 684.0H347L347 684.0H348L348 684.0H349L349 684.0H350L350 686.0H351L351 689.0H352L352 689.9H353L353 684.0H354L354 684.0H355L355 685.4H356L356 684.6H357L357 684.0H358L358 684.0H359L359 684.0H360L360 684.0H361L361 684.0H362L362 684.0H363L363 684.0H364L364 684.0H365L365 684.0H366L366 684.0H367L367 684.0H368L368 684.0H369L369 684.0H370L370 689.0H371L371 686.7H372L372 684.4H373L373 684.9H374L374 685.9H375L375 684.4H376L376 684.0H377L377 684.0H378L378 684.0H379L379 684.0H380L380 686.3H381L381 684.8H382L382 684.3H383L383 686.0H384L384 686.2H385L385 685.2H386L386 685.8H387L387 684.0H388L388 684.0H389L389 684.0H390L390 684.0H391L391 684.0H392L392 684.0H393L393 684.4H394L394 685.0H395L395 687.6H396L396 688.9H397L397 685.3H398L398 684.0H399L399 684.0H400L400 684.5H401L401 685.0H402L402 684.8H403L403 685.2H404L404 684.9H405L405 685.3H406L406 684.0H407L407 684.0H408L408 684.0H409L409 686.2H410L410 685.5H411L411 684.9H412L412 685.6H413L413 685.7H414L414 684.0H415L415 684.0H416L416 686.2H417L417 689.7H418L418 687.0H419L419 685.6H420L420 685.8H421L421 684.0H422L422 684.0H423L423 684.0H424L424 684.0H425L425 684.0H426L426 684.0H427L427 684.0H428L428 684.0H429L429 684.0H430L430 684.0H431L431 684.0H432L432 684.0H433L433 684.0H434L434 684.0H435L435 684.0H436L436 686.1H437L437 686.0H438L438 684.5H439L439 684.0H440L440 684.0H441L441 685.7H442L442 688.2H443L443 684.0H444L444 684.0H445L445 684.0H446L446 684.0H447L447 684.0H448L448 684.0H449L449 685.0H450L450 686.1H451L451 685.6H452L452 685.0H453L453 684.4H454L454 684.8H455L455 684.0H456L456 684.0H457L457 684.0H458L458 689.5H459L459 694.7H460L460 689.8H461L461 684.0H462L462 686.4H463L463 690.5H464L464 687.9H465L465 684.0H466L466 684.0H467L467 684.0H468L468 684.0H469L469 684.0H470L470 684.0H471L471 684.0H472L472 684.0H473L473 684.0H474L474 684.0H475L475 684.0H476L476 684.0H477L477 684.0H478L478 684.0H479L479 684.0H480L480 685.3H481L481 686.0H482L482 684.8H483L483 684.0H484L484 684.0H485L485 684.0H486L486 684.0H487L487 684.9H488L488 686.1H489L489 685.3H490L490 684.4H491L491 685.9H492L492 684.4H493L493 684.0H494L494 684.0H495L495 687.0H496L496 690.2H497L497 685.8H498L498 684.5H499L499 686.0H500L500 686.1H501L501 684.0H502L502 684.0H503L503 684.0H504L504 684.0H505L505 684.0H506L506 684.6H507L507 685.8H508L508 685.9H509L509 685.7H510L510 684.0H511L511 685.6H512L512 689.6H513L513 689.2H514L514 686.9H515L515 684.0H516L516 684.0H517L517 686.2H518L518 689.2H519L519 694.4H520L520 690.0H521L521 684.0H522L522 684.0H523L523 684.0H524L524 684.0H525L525 686.1H526L526 685.9H527L527 689.7H528L528 684.0H529L529 684.0H530L530 684.0H531L531 684.0H532L532 684.0H533L533 684.0H534L534 684.0H535L535 684.0H536L536 684.0H537L537 684.0H538L538 684.0H539L539 684.0H540L540 684.0H541L541 686.2H542L542 686.1H543L543 686.2H544L544 684.6H545L545 688.1H546L546 689.9H547L547 684.0H548L548 684.0H549L549 684.0H550L550 684.7H551L551 685.3H552L552 694.5H553L553 684.0H554L554 684.0H555L555 684.0H556L556 684.0H557L557 685.7H558L558 685.1H559L559 686.9H560L560 691.8H561L561 691.6H562L562 685.0H563L563 684.0H564L564 684.0H565L565 684.0H566L566 684.0H567L567 685.7H568L568 685.7H569L569 684.5H570L570 684.7H571L571 692.9H572L572 689.5H573L573 684.0H574L574 684.0H575L575 684.0H576L576 684.0H577L577 684.0H578L578 684.0H579L579 684.0H580L580 684.0H581L581 684.0H582L582 684.0H583L583 684.0H584L584 684.0H585L585 684.0H586L586 684.0H587L587 684.0H588L588 686.3H589L589 690.2H590L590 685.6H591L591 686.0H592L592 684.0H593L593 684.0H594L594 686.2H595L595 686.0H596L596 686.0H597L597 687.9H598L598 687.7H599L599 684.0H600L600 684.0H601L601 684.0H602L602 684.0H603L603 684.0H604L604 684.0H605L605 684.4H606L606 685.0H607L607 684.0H608L608 684.0H609L609 684.0H610L610 684.7H611L611 684.0H612L612 684.0H613L613 684.0H614L614 684.0H615L615 684.0H616L616 684.0H617L617 684.0H618L618 684.0H619L619 684.0H620L620 684.0H621L621 684.0H622L622 684.0H623L623 684.0H624L624 684.0H625L625 684.0H626L626 684.5H627L627 688.3H628L628 687.3H629L629 685.5H630L630 684.0H631L631 684.0H632L632 685.8H633L633 686.1H634L634 688.6H635L635 689.5H636L636 687.1H637L637 684.0H638L638 684.0H639L639 684.0H640L640 684.0H641L641 684.0H642L642 684.0H643L643 684.0H644L644 687.2H645L645 690.1H646L646 687.0H647L647 684.9H648L648 689.3H649L649 692.1H650L650 688.2H651L651 684.3H652L652 685.9H653L653 686.1H654L654 684.0H655L655 684.0H656L656 684.0H657L657 684.0H658L658 684.0H659L659 684.0H660L660 684.0H661L661 684.0H662L662 684.0H663L663 684.0H664L664 684.0H665L665 684.0H666L666 684.0H667L667 684.0H668L668 684.0H669L669 684.4H670L670 687.4H671L671 694.5H672L672 684.0H673L673 684.0H674L674 684.0H675L675 684.0H676L676 684.0H677L677 684.0H678L678 684.0H679L679 684.0H680L680 684.0H681L681 684.0H682L682 684.0H683L683 684.0H684L684 685.7H685L685 684.6H686L686 684.6H687L687 684.6H688L688 691.9H689L689 688.3H690L690 684.0H691L691 684.0H692L692 684.0H693L693 685.0H694L694 685.1H695L695 684.6H696L696 684.0H697L697 684.0H698L698 684.0H699L699 684.0H700L700 684.3H701L701 685.6H702L702 685.1H703L703 685.9H704L704 684.0H705L705 684.0H706L706 684.0H707L707 684.0H708L708 684.0H709L709 684.0H710L710 684.0H711L711 684.0H712L712 684.0H713L713 684.0H714L714 684.0H715L715 684.0H716L716 684.0H717L717 684.0H718L718 687.0H719L719 692.8H720L720 689.8H721L721 684.0H722L722 684.0H723L723 684.7H724L724 685.0H725L725 685.4H726L726 688.7H727L727 684.0H728L728 684.0H729L729 686.3H730L730 688.4H731L731 687.2H732L732 685.2H733L733 685.0H734L734 686.0H735L735 684.0H736L736 684.0H737L737 685.6H738L738 684.6H739L739 684.4H740L740 685.5H741L741 684.0H742L742 684.0H743L743 684.0H744L744 684.0H745L745 684.0H746L746 684.0H747L747 684.0H748L748 684.0H749L749 684.0H750L750 684.0H751L751 685.7H752L752 686.4H753L753 688.7H754L754 686.9H755L755 684.0H756L756 684.0H757L757 684.0H758L758 684.0H759L759 684.0H760L760 684.0H761L761 684.0H762L762 684.0H763L763 684.0H764L764 685.5H765L765 686.2H766L766 684.0H767L767 684.0H768L768 684.0H769L769 684.0H770L770 684.0H771L771 684.0H772L772 684.0H773L773 684.0H774L774 684.0H775L775 684.0H776L776 684.0H777L777 684.0H778L778 684.0H779L779 684.0H780L780 684.0H781L781 684.4H782L782 686.3H783L783 686.0H784L784 684.0H785L785 684.0H786L786 684.0H787L787 684.0H788L788 684.0H789L789 684.0H790L790 684.0H791L791 684.0H792L792 684.0H793L793 684.0H794L794 684.0H795L795 685.4H796L796 684.0H797L797 684.0H798L798 684.3H799L799 687.7H800L800 687.6H801L801 685.9H802L802 685.3H803L803 685.8H804L804 684.8H805L805 684.0H806L806 684.0H807L807 684.0H808L808 684.0H809L809 685.2H810L810 685.6H811L811 684.0H812L812 684.0H813L813 686.2H814L814 684.8H815L815 685.3H816L816 684.5H817L817 685.3H818L818 684.0H819L819 684.0H820L820 684.0H821L821 684.0H822L822 684.3H823L823 686.6H824L824 688.5H825L825 684.8H826L826 685.0H827L827 685.9H828L828 684.0H829L829 684.0H830L830 684.0H831L831 684.0H832L832 685.1H833L833 689.1H834L834 692.4H835L835 684.0H836L836 684.0H837L837 684.0H838L838 684.0H839L839 684.0H840L840 684.0H841L841 684.0H842L842 684.0H843L843 684.0H844L844 684.0H845L845 684.0H846L846 684.0H847L847 684.9H848L848 688.8H849L849 691.1H850L850 685.6H851L851 687.2H852L852 688.8H853L853 690.4H854V710.8Z" fill="#1283b7"/><rect x="121" y="697.5" width="733" height="1" fill="#6ab6da" opacity=".6"/></svg>
<div class="abs" style="left:123.5px;top:665px;width:199px;height:14px;background:rgba(90,120,170,.35);border-radius:3px"></div>
<div class="t" style="left:124.5px;top:666.5px;font-size:11px;color:#fff;letter-spacing:-0.1px">4fa8c509-4893-445f-95fa-31a7f8e0e384</div>
<div class="abs" style="left:290px;top:479px;width:2px;height:282px;background:rgba(255,255,255,.62)"></div>
<svg style="left:285.5px;top:466px" width="11" height="15" viewBox="0 0 11 15"><path d="M1 2.6a1.6 1.6 0 0 1 1.6-1.6h5.8a1.6 1.6 0 0 1 1.6 1.6v6.2C10 11.4 7.6 13.6 5.5 13.8C3.4 13.6 1 11.4 1 8.8z" fill="#1c1c1c" stroke="#fff" stroke-width="1.7" stroke-linejoin="round"/></svg>
<!-- ===== timeline toolbar ===== -->
<svg style="left:-6px;top:443px" width="16" height="16" viewBox="0 0 16 16"><path d="M4.2 1.2L14.2 7.6L9.8 8.6L12.4 13.2L10.2 14.4L7.6 9.8L4.6 12.8z" fill="none" stroke="#f0f0f0" stroke-width="1.5" stroke-linejoin="round"/></svg>
<svg style="left:21.5px;top:448px" width="8" height="5" viewBox="0 0 8 5"><path d="M0.8 0.8L4 4l3.2-3.2" fill="none" stroke="#f0f0f0" stroke-width="1.5"/></svg>
<div class="abs" style="left:43px;top:442px;width:1px;height:16px;background:#3c3c3c"></div>
<!-- undo / redo -->
<svg style="left:66px;top:443px" width="12" height="13" viewBox="0 0 12 13"><path d="M0.8 3.6h6.4a4 4 0 0 1 0 8.2H1.6" fill="none" stroke="#585858" stroke-width="1.5"/><path d="M3.8 0.6L0.8 3.6l3 3" fill="none" stroke="#585858" stroke-width="1.5"/></svg>
<svg style="left:102px;top:443px" width="12" height="13" viewBox="0 0 12 13"><path d="M11.2 3.6H4.8a4 4 0 0 0 0 8.2h5.6" fill="none" stroke="#585858" stroke-width="1.5"/><path d="M8.2 0.6l3 3-3 3" fill="none" stroke="#585858" stroke-width="1.5"/></svg>
<!-- split -->
<svg style="left:138.5px;top:443.5px" width="11" height="13" viewBox="0 0 11 13"><path d="M0.6 0.8h3v11.4h-3M10.4 0.8h-3v11.4h3" fill="none" stroke="#6a6a6a" stroke-width="1.5"/></svg>
<svg style="left:175px;top:443.5px" width="11" height="13" viewBox="0 0 11 13"><path d="M0.4 0.8h2M0.4 12.2h2" stroke="#5c5c5c" stroke-width="1.5"/><path d="M3.2 0.8v11.4" stroke="#5c5c5c" stroke-width="1.3" stroke-dasharray="1 1"/><path d="M10.2 0.8h-3v11.4h3" fill="none" stroke="#5c5c5c" stroke-width="1.5"/></svg>
<svg style="left:211px;top:443.5px" width="11" height="13" viewBox="0 0 11 13"><path d="M10.6 0.8h-2M10.6 12.2h-2" stroke="#5c5c5c" stroke-width="1.5"/><path d="M7.8 0.8v11.4" stroke="#5c5c5c" stroke-width="1.3" stroke-dasharray="1 1"/><path d="M0.8 0.8h3v11.4h-3" fill="none" stroke="#5c5c5c" stroke-width="1.5"/></svg>
<!-- trash -->
<svg style="left:245px;top:442.5px" width="14" height="14" viewBox="0 0 14 14"><path d="M0.4 2.8h13.2M5.4 2.8V0.8h3.2v2" fill="none" stroke="#f2f2f2" stroke-width="1.6"/><path d="M2.2 2.8v10.2h9.6V2.8" fill="none" stroke="#f2f2f2" stroke-width="1.6" stroke-linejoin="round"/></svg>
<!-- marker -->
<svg style="left:282.5px;top:444px" width="12" height="13" viewBox="0 0 12 13"><path d="M0.8 2a1.2 1.2 0 0 1 1.2-1.2h8a1.2 1.2 0 0 1 1.2 1.2v5.8L6 12.2 0.8 7.8z" fill="none" stroke="#e6e6e6" stroke-width="1.5" stroke-linejoin="round"/></svg>
<!-- caption remove -->
<svg style="left:315.5px;top:443.5px" width="17" height="14" viewBox="0 0 17 14"><path d="M9.6 11.6H0.8V0.8h14v6.4" fill="none" stroke="#f0f0f0" stroke-width="1.5" stroke-linejoin="round"/><path d="M3.4 4.4h8.6M3.4 7.6h6" stroke="#f0f0f0" stroke-width="1.4"/><path d="M11.4 8.8l4.6 4.6M16 8.8l-4.6 4.6" stroke="#f0f0f0" stroke-width="1.6"/></svg>
<!-- mic -->
<svg style="left:636px;top:442px" width="13" height="16" viewBox="0 0 13 16"><rect x="4" y="0.7" width="5" height="9.4" rx="2.2" fill="none" stroke="#e4e4e4" stroke-width="1.3"/><path d="M0.9 6.6v3.2a2.2 2.2 0 0 0 2.2 2.2h6.8a2.2 2.2 0 0 0 2.2-2.2V6.6M6.5 12v3M3 15.2h7" fill="none" stroke="#e4e4e4" stroke-width="1.3"/></svg>
<div class="abs" style="left:666px;top:442px;width:1px;height:16px;background:#3c3c3c"></div>
<!-- main track magnet -->
<svg style="left:681.5px;top:446.5px" width="19" height="7" viewBox="0 0 20 8" preserveAspectRatio="none"><rect x="0.7" y="0.9" width="4.6" height="6" fill="none" stroke="#efefef" stroke-width="1.3"/><path d="M7.2 4h6M9.6 1.6L7.2 4l2.4 2.4" fill="none" stroke="#efefef" stroke-width="1.3"/><path d="M11 0.9h6.4a1.4 1.4 0 0 1 1.4 1.4v3.4a1.4 1.4 0 0 1-1.4 1.4H11" fill="none" stroke="#efefef" stroke-width="1.3"/></svg>
<!-- auto snap (active) -->
<div class="abs" style="left:715px;top:438px;width:24px;height:24px;border-radius:5px;background:#171717"></div>
<svg style="left:717px;top:440px" width="20" height="20" viewBox="0 0 20 20"><rect x="1" y="6.8" width="18" height="6.4" fill="#17c4d4"/><rect x="9.3" y="7.6" width="1.4" height="4.8" fill="#0b3b40"/><path d="M10 1.4v2.6M5.6 2.8l1.4 2M14.4 2.8l-1.4 2M10 18.6V16M5.6 17.2l1.4-2M14.4 17.2l-1.4-2" stroke="#17c4d4" stroke-width="1.2"/></svg>
<!-- link (active) + dropdown -->
<div class="abs" style="left:751px;top:438px;width:38px;height:24px;border-radius:5px;background:#171717"></div>
<div class="abs" style="left:775px;top:438px;width:1px;height:24px;background:#2a2a2a"></div>
<svg style="left:754px;top:446.5px" width="18" height="7" viewBox="0 0 18 7"><rect width="18" height="7" fill="#17c4d4"/><path d="M7.4 1.8H4.6v3.4h2.8M10.6 1.8h2.8v3.4h-2.8M6.6 3.5h4.8" fill="none" stroke="#0b3b40" stroke-width="1.1"/></svg>
<svg style="left:779px;top:448px" width="8" height="5" viewBox="0 0 8 5"><path d="M0.8 0.8L4 4l3.2-3.2" fill="none" stroke="#f0f0f0" stroke-width="1.5"/></svg>
<!-- preview axis -->
<svg style="left:803.5px;top:442.5px" width="20" height="15" viewBox="0 0 20 15"><path d="M6.8 4H0.8v6.6h6M11.2 4h6.4v4" fill="none" stroke="#ececec" stroke-width="1.3"/><path d="M9 0.4v13.8" stroke="#ececec" stroke-width="1.4"/><path d="M11.6 6.6l6.4 3.8-2.8 0.6 1.6 2.8-1.4 0.8-1.6-2.8-2 2z" fill="#ececec"/></svg>
<svg style="left:829px;top:448px" width="8" height="5" viewBox="0 0 8 5"><path d="M0.8 0.8L4 4l3.2-3.2" fill="none" stroke="#f0f0f0" stroke-width="1.5"/></svg>
<div class="abs" style="left:851px;top:442px;width:1px;height:16px;background:#3c3c3c"></div>
<!-- ruler zoom-to-fit -->
<svg style="left:867px;top:443.5px" width="17" height="13" viewBox="0 0 17 13"><path d="M8 8.4H0.7V0.7h15.6v5.6" fill="none" stroke="#e8e8e8" stroke-width="1.3"/><path d="M3.4 0.7v3.4M6.2 0.7v2.4M9 0.7v3.4M11.8 0.7v2.4M14 0.7v3.4" stroke="#e8e8e8" stroke-width="1.1"/><circle cx="11.8" cy="8.2" r="3" fill="#262626" stroke="#e8e8e8" stroke-width="1.3"/><path d="M14 10.6l2 2" stroke="#e8e8e8" stroke-width="1.3"/></svg>
<!-- zoom out -->
<svg style="left:905px;top:443px" width="15" height="15" viewBox="0 0 15 15"><circle cx="7" cy="6.8" r="6" fill="none" stroke="#e8e8e8" stroke-width="1.3"/><path d="M4.4 6.8h5.2" stroke="#e8e8e8" stroke-width="1.5"/><path d="M11.4 11.2l2 2" stroke="#e8e8e8" stroke-width="1.3"/></svg>
<!-- slider -->
<div class="abs" style="left:959px;top:448.5px;width:54px;height:3px;background:#060606"></div>
<div class="abs" style="left:936px;top:449px;width:17px;height:2px;background:#f4f4f4;border-radius:1px"></div>
<div class="abs" style="left:951px;top:444px;width:8px;height:12px;background:#f6f6f6;border-radius:3px"></div>

<!--TL-END-->

</body>
</html>
